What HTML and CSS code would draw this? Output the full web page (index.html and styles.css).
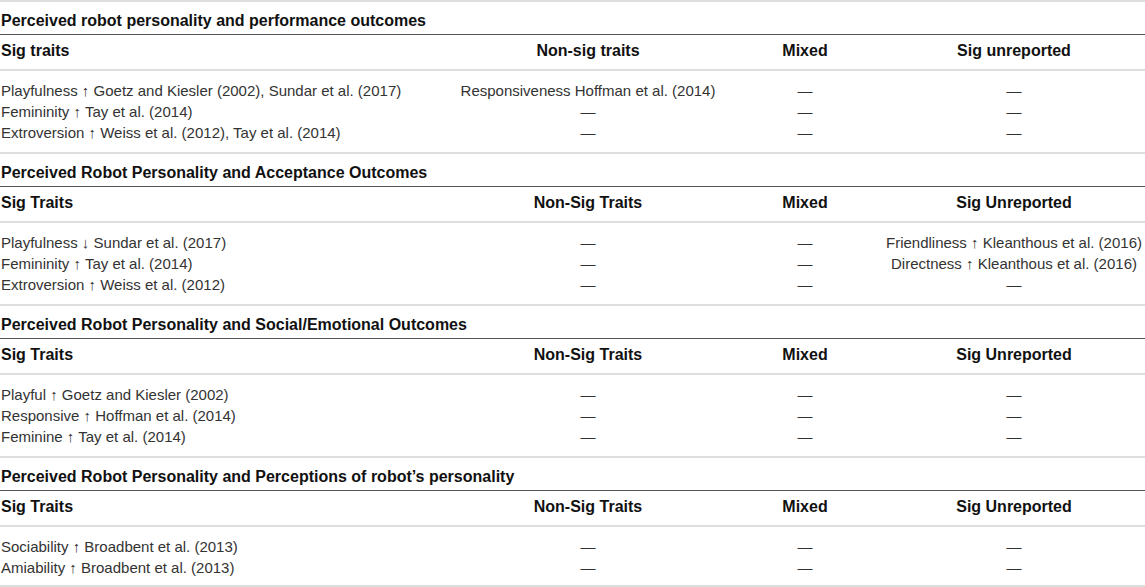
FILE: index.html
```html
<!DOCTYPE html>
<html>
<head>
<meta charset="utf-8">
<link rel="stylesheet" href="styles.css">
</head>
<body>
<main class="table">
  <section class="sec">
    <div class="title">Perceived robot personality and performance outcomes</div>
    <div class="row head"><div class="c1">Sig traits</div><div class="c">Non-sig traits</div><div class="c">Mixed</div><div class="c">Sig unreported</div></div>
    <div class="body">
      <div class="row"><div class="c1">Playfulness ↑ Goetz and Kiesler (2002), Sundar et al. (2017)</div><div class="c">Responsiveness Hoffman et al. (2014)</div><div class="c">—</div><div class="c">—</div></div>
      <div class="row"><div class="c1">Femininity ↑ Tay et al. (2014)</div><div class="c">—</div><div class="c">—</div><div class="c">—</div></div>
      <div class="row"><div class="c1">Extroversion ↑ Weiss et al. (2012), Tay et al. (2014)</div><div class="c">—</div><div class="c">—</div><div class="c">—</div></div>
    </div>
  </section>
  <section class="sec">
    <div class="title">Perceived Robot Personality and Acceptance Outcomes</div>
    <div class="row head"><div class="c1">Sig Traits</div><div class="c">Non-Sig Traits</div><div class="c">Mixed</div><div class="c">Sig Unreported</div></div>
    <div class="body">
      <div class="row"><div class="c1">Playfulness ↓ Sundar et al. (2017)</div><div class="c">—</div><div class="c">—</div><div class="c">Friendliness ↑ Kleanthous et al. (2016)</div></div>
      <div class="row"><div class="c1">Femininity ↑ Tay et al. (2014)</div><div class="c">—</div><div class="c">—</div><div class="c">Directness ↑ Kleanthous et al. (2016)</div></div>
      <div class="row"><div class="c1">Extroversion ↑ Weiss et al. (2012)</div><div class="c">—</div><div class="c">—</div><div class="c">—</div></div>
    </div>
  </section>
  <section class="sec">
    <div class="title">Perceived Robot Personality and Social/Emotional Outcomes</div>
    <div class="row head"><div class="c1">Sig Traits</div><div class="c">Non-Sig Traits</div><div class="c">Mixed</div><div class="c">Sig Unreported</div></div>
    <div class="body">
      <div class="row"><div class="c1">Playful ↑ Goetz and Kiesler (2002)</div><div class="c">—</div><div class="c">—</div><div class="c">—</div></div>
      <div class="row"><div class="c1">Responsive ↑ Hoffman et al. (2014)</div><div class="c">—</div><div class="c">—</div><div class="c">—</div></div>
      <div class="row"><div class="c1">Feminine ↑ Tay et al. (2014)</div><div class="c">—</div><div class="c">—</div><div class="c">—</div></div>
    </div>
  </section>
  <section class="sec last">
    <div class="title">Perceived Robot Personality and Perceptions of robot’s personality</div>
    <div class="row head"><div class="c1">Sig Traits</div><div class="c">Non-Sig Traits</div><div class="c">Mixed</div><div class="c">Sig Unreported</div></div>
    <div class="body">
      <div class="row"><div class="c1">Sociability ↑ Broadbent et al. (2013)</div><div class="c">—</div><div class="c">—</div><div class="c">—</div></div>
      <div class="row"><div class="c1">Amiability ↑ Broadbent et al. (2013)</div><div class="c">—</div><div class="c">—</div><div class="c">—</div></div>
    </div>
  </section>
</main>
</body>
</html>
```
FILE: styles.css
```css
*, *::before, *::after {
  box-sizing: border-box;
}
html, body {
  margin: 0;
  padding: 0;
  background: #fff;
}
body {
  font-family: "Liberation Sans", Arial, sans-serif;
  color: #333;
  font-size: 15px;
}
.table {
  width: 1145px;
}
.sec {
  border-top: 2px solid #dedede;
}
.sec.last {
  border-bottom: 2px solid #dedede;
}
.title {
  height: 33px;
  padding-top: 5px;
  display: flex;
  align-items: center;
  padding-left: 1px;
  font-weight: bold;
  color: #111;
  font-size: 16px;
  border-bottom: 1px solid #555;
  white-space: nowrap;
}
.row {
  display: grid;
  grid-template-columns: 449px 278px 156px 262px;
  line-height: 21px;
}
.head {
  height: 36px;
  padding-bottom: 3px;
  align-items: center;
  font-weight: bold;
  font-size: 16px;
  color: #111;
  border-bottom: 2px solid #dedede;
}
.body {
  padding: 9px 0 9px;
}
.last .body {
  padding-bottom: 7px;
}
.c1 {
  padding-left: 1px;
  white-space: nowrap;
}
.c {
  text-align: center;
  white-space: nowrap;
}
```
